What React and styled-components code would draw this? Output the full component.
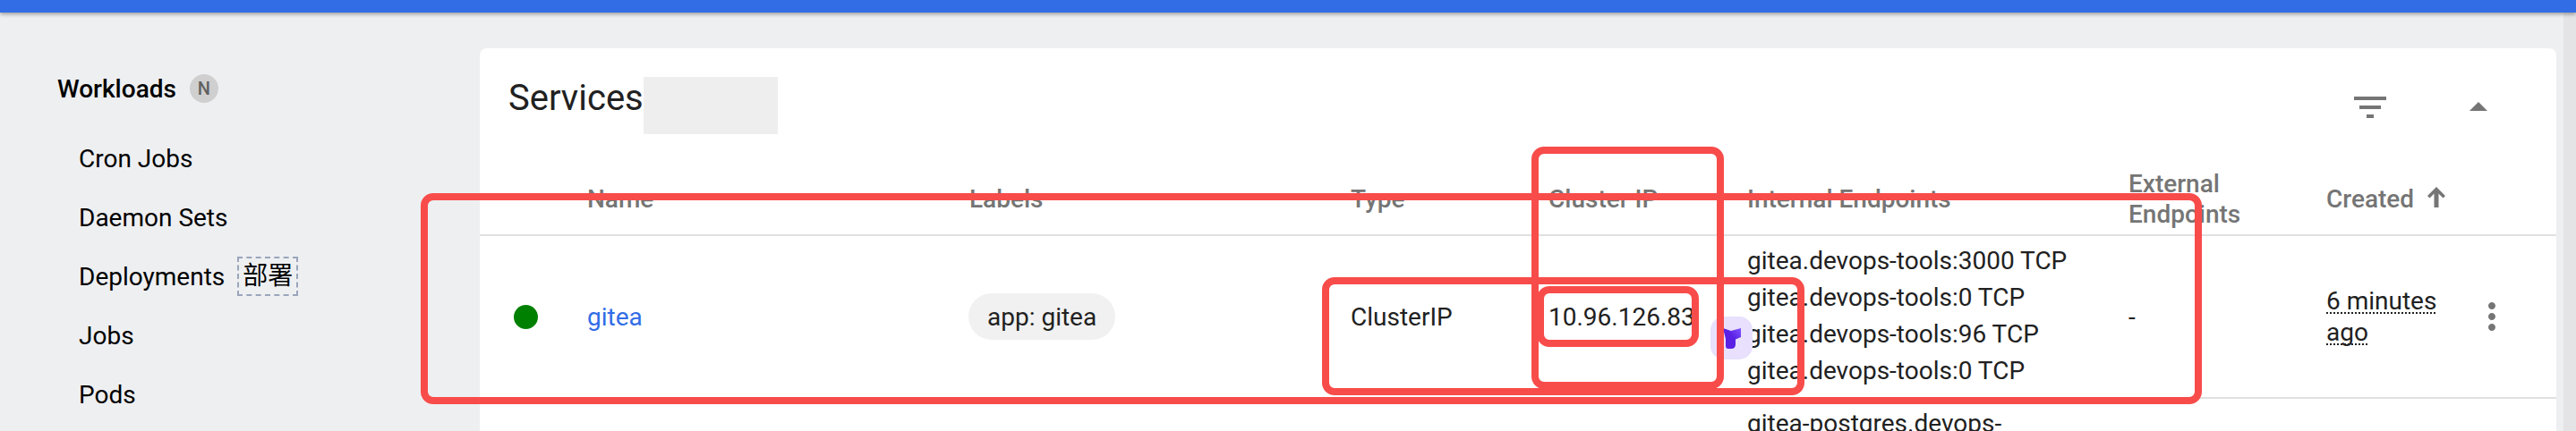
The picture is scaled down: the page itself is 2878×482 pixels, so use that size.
import styled, { createGlobalStyle } from 'styled-components';

const GlobalStyle = createGlobalStyle`
  html, body {
    margin: 0;
    height: 482px;
    overflow: hidden;
    background: #eeeff1;
    font-family: Roboto, "Noto Sans CJK SC", sans-serif;
    color: #212121;
  }
`;

const navItems = ['Cron Jobs', 'Daemon Sets', 'Deployments', 'Jobs', 'Pods'];
const columns = ['Name', 'Labels', 'Type', 'Cluster IP', 'Internal Endpoints'];
const endpoints = [
  'gitea.devops-tools:3000 TCP',
  'gitea.devops-tools:0 TCP',
  'gitea.devops-tools:96 TCP',
  'gitea.devops-tools:0 TCP',
];

// red annotation frames drawn on top of the screenshot
const frames = [
  { x: 470, y: 216, w: 1990, h: 236 },
  { x: 1711, y: 164, w: 215, h: 271 },
  { x: 1477, y: 310, w: 539, h: 132 },
  { x: 1717, y: 320, w: 181, h: 68 },
];

const TABLE_COLS = '120px 427px 426px 221px 222px 426px 221px 1fr';

const App = () => {
  return (
    <Page>
      <GlobalStyle />
      <TopBar />
      <Body>
        <Sidebar>
          <NavTitle>
            Workloads <CountBadge>N</CountBadge>
          </NavTitle>
          {navItems.map((item) => (
            <NavItem key={item}>
              {item}
              {item === 'Deployments' && <NoteTag>部署</NoteTag>}
            </NavItem>
          ))}
        </Sidebar>
        <Card>
          <TitleBar>
            <Title>Services</Title>
            <Redacted />
            <TitleActions>
              <IconButton>
                <svg viewBox="0 0 24 24" width="48" height="48" fill="#757575">
                  <path d="M10 18h4v-2h-4v2zM3 6v2h18V6H3zm3 7h12v-2H6v2z" />
                </svg>
              </IconButton>
              <IconButton>
                <svg viewBox="0 0 24 24" width="48" height="48" fill="#757575">
                  <path d="M7 14l5-5 5 5z" />
                </svg>
              </IconButton>
            </TitleActions>
          </TitleBar>
          <HeaderRow>
            <span />
            {columns.map((c) => (
              <HeaderCell key={c}>{c}</HeaderCell>
            ))}
            <HeaderCell $narrow>External Endpoints</HeaderCell>
            <HeaderCell>
              Created
              <SortArrow viewBox="0 0 20 23" width="20" height="23" fill="#757575">
                <path d="M10 0L20 10L17.5 12.5L12.5 7.5V23H7.5V7.5L2.5 12.5L0 10Z" />
              </SortArrow>
            </HeaderCell>
          </HeaderRow>
          <Row>
            <Cell>
              <StatusDot />
            </Cell>
            <Cell>
              <NameLink>gitea</NameLink>
            </Cell>
            <Cell>
              <Chip>app: gitea</Chip>
            </Cell>
            <Cell>ClusterIP</Cell>
            <Cell>
              <ClusterIp>10.96.126.83</ClusterIp>
            </Cell>
            <EndpointList>
              {endpoints.map((e, i) => (
                <div key={i}>{e}</div>
              ))}
            </EndpointList>
            <Cell>-</Cell>
            <Cell>
              <TimeAgo>
                <span>6 minutes</span> <span>ago</span>
              </TimeAgo>
              <Kebab viewBox="0 0 24 24" width="48" height="48" fill="#757575">
                <path d="M12 8c1.1 0 2-.9 2-2s-.9-2-2-2-2 .9-2 2 .9 2 2 2zm0 2c-1.1 0-2 .9-2 2s.9 2 2 2 2-.9 2-2-.9-2-2-2zm0 6c-1.1 0-2 .9-2 2s.9 2 2 2 2-.9 2-2-.9-2-2-2z" />
              </Kebab>
            </Cell>
          </Row>
          <Row>
            <span />
            <span />
            <span />
            <span />
            <span />
            <EndpointList>
              <div>gitea-postgres.devops-</div>
            </EndpointList>
          </Row>
        </Card>
        <Scrollbar />
      </Body>
      <ExtensionBubble>
        <svg viewBox="0 0 20 23" width="20" height="23">
          <defs>
            <linearGradient id="bubbleFill" x1="0" y1="1" x2="1" y2="0">
              <stop offset="0" stopColor="#5a20e4" />
              <stop offset="0.55" stopColor="#5a20e4" />
              <stop offset="1" stopColor="#7f52ff" />
            </linearGradient>
          </defs>
          <path d="M0 0L9 3L20 0V10L14 12.5V18Q14 23 9 23H6Q3 23 3 20V12Z" fill="url(#bubbleFill)" />
        </svg>
      </ExtensionBubble>
      {frames.map((f, i) => (
        <RedFrame key={i} style={{ left: f.x, top: f.y, width: f.w, height: f.h }} />
      ))}
    </Page>
  );
};

const Page = styled.div`
  position: relative;
  width: 2878px;
  height: 482px;
  overflow: hidden;
`;

const TopBar = styled.div`
  height: 14px;
  background: #326de6;
  box-shadow: 0 2px 4px rgba(0, 0, 0, 0.35);
  position: relative;
`;

const Body = styled.div`
  display: flex;
  align-items: flex-start;
  padding-top: 40px;
`;

const Sidebar = styled.div`
  width: 536px;
  flex-shrink: 0;
  padding: 29px 0 0 64px;
  box-sizing: border-box;
  font-size: 28px;
  color: #000;
`;

const NavTitle = styled.div`
  display: flex;
  align-items: center;
  gap: 15px;
  height: 32px;
  font-weight: 500;
  margin-bottom: 29px;
`;

const CountBadge = styled.span`
  width: 32px;
  height: 32px;
  border-radius: 50%;
  background: #cfcfcf;
  color: #616161;
  font-size: 20px;
  font-weight: 500;
  display: flex;
  align-items: center;
  justify-content: center;
`;

const NavItem = styled.div`
  display: flex;
  align-items: center;
  height: 66px;
  padding-left: 24px;
`;

const NoteTag = styled.span`
  box-sizing: border-box;
  width: 68px;
  height: 44px;
  margin-left: 14px;
  border: 2px dashed #9aa5bb;
  display: flex;
  align-items: center;
  justify-content: center;
  font-size: 28px;
  line-height: 1;
`;

const Card = styled.div`
  width: 2320px;
  flex-shrink: 0;
  height: 460px;
  background: #fff;
  border-radius: 8px 8px 0 0;
`;

const Scrollbar = styled.div`
  width: 14px;
  height: 468px;
  margin-left: 8px;
  margin-top: -40px;
  background: #e4e4e6;
`;

const TitleBar = styled.div`
  display: flex;
  align-items: flex-start;
  height: 130px;
  padding-left: 32px;
  box-sizing: border-box;
`;

const Title = styled.h1`
  margin: 34px 0 0;
  font-size: 40px;
  line-height: 44px;
  font-weight: 400;
  color: #212121;
`;

const Redacted = styled.div`
  width: 150px;
  height: 64px;
  margin-top: 32px;
  background: #eeeeee;
`;

const TitleActions = styled.div`
  display: flex;
  gap: 73px;
  margin-left: auto;
  margin-top: 42px;
  margin-right: 63px;
`;

const IconButton = styled.div`
  width: 48px;
  height: 48px;
`;

const HeaderRow = styled.div`
  display: grid;
  grid-template-columns: ${TABLE_COLS};
  align-items: center;
  height: 78px;
  border-bottom: 2px solid #e0e0e0;
`;

const HeaderCell = styled.div`
  display: flex;
  align-items: center;
  font-size: 28px;
  line-height: 34px;
  font-weight: 500;
  color: #757575;
  max-width: ${(p) => (p.$narrow ? '160px' : 'none')};
`;

const SortArrow = styled.svg`
  margin: -5px 0 0 15px;
`;

const Row = styled.div`
  display: grid;
  grid-template-columns: ${TABLE_COLS};
  align-items: center;
  min-height: 180px;
  border-bottom: 2px solid #e0e0e0;
  font-size: 28px;
  color: #212121;
`;

const Cell = styled.div`
  display: flex;
  align-items: center;
`;

const StatusDot = styled.span`
  width: 27px;
  height: 27px;
  margin-left: 38px;
  border-radius: 50%;
  background: #008000;
`;

const NameLink = styled.a`
  color: #326de6;
`;

const Chip = styled.span`
  box-sizing: border-box;
  height: 52px;
  margin-left: -1px;
  padding: 0 21px;
  border-radius: 26px;
  background: #f1f1f1;
  display: inline-flex;
  align-items: center;
`;

const ClusterIp = styled.span`
  white-space: nowrap;
`;

const EndpointList = styled.div`
  line-height: 41px;
  align-self: start;
  padding-top: 7px;
`;

const TimeAgo = styled.div`
  width: 130px;
  line-height: 35px;
  span {
    text-decoration: underline dotted #212121 2px;
    text-underline-offset: 3px;
    text-decoration-skip-ink: none;
  }
`;

const Kebab = styled.svg`
  margin-left: 31px;
`;

const ExtensionBubble = styled.div`
  position: absolute;
  left: 1911px;
  top: 354px;
  width: 47px;
  height: 48px;
  border-radius: 15px;
  background: #e8e0fd;
  display: flex;
  align-items: center;
  justify-content: center;
`;

const RedFrame = styled.div`
  position: absolute;
  box-sizing: border-box;
  border: 8px solid #f84c4a;
  border-radius: 14px;
`;

export default App;
